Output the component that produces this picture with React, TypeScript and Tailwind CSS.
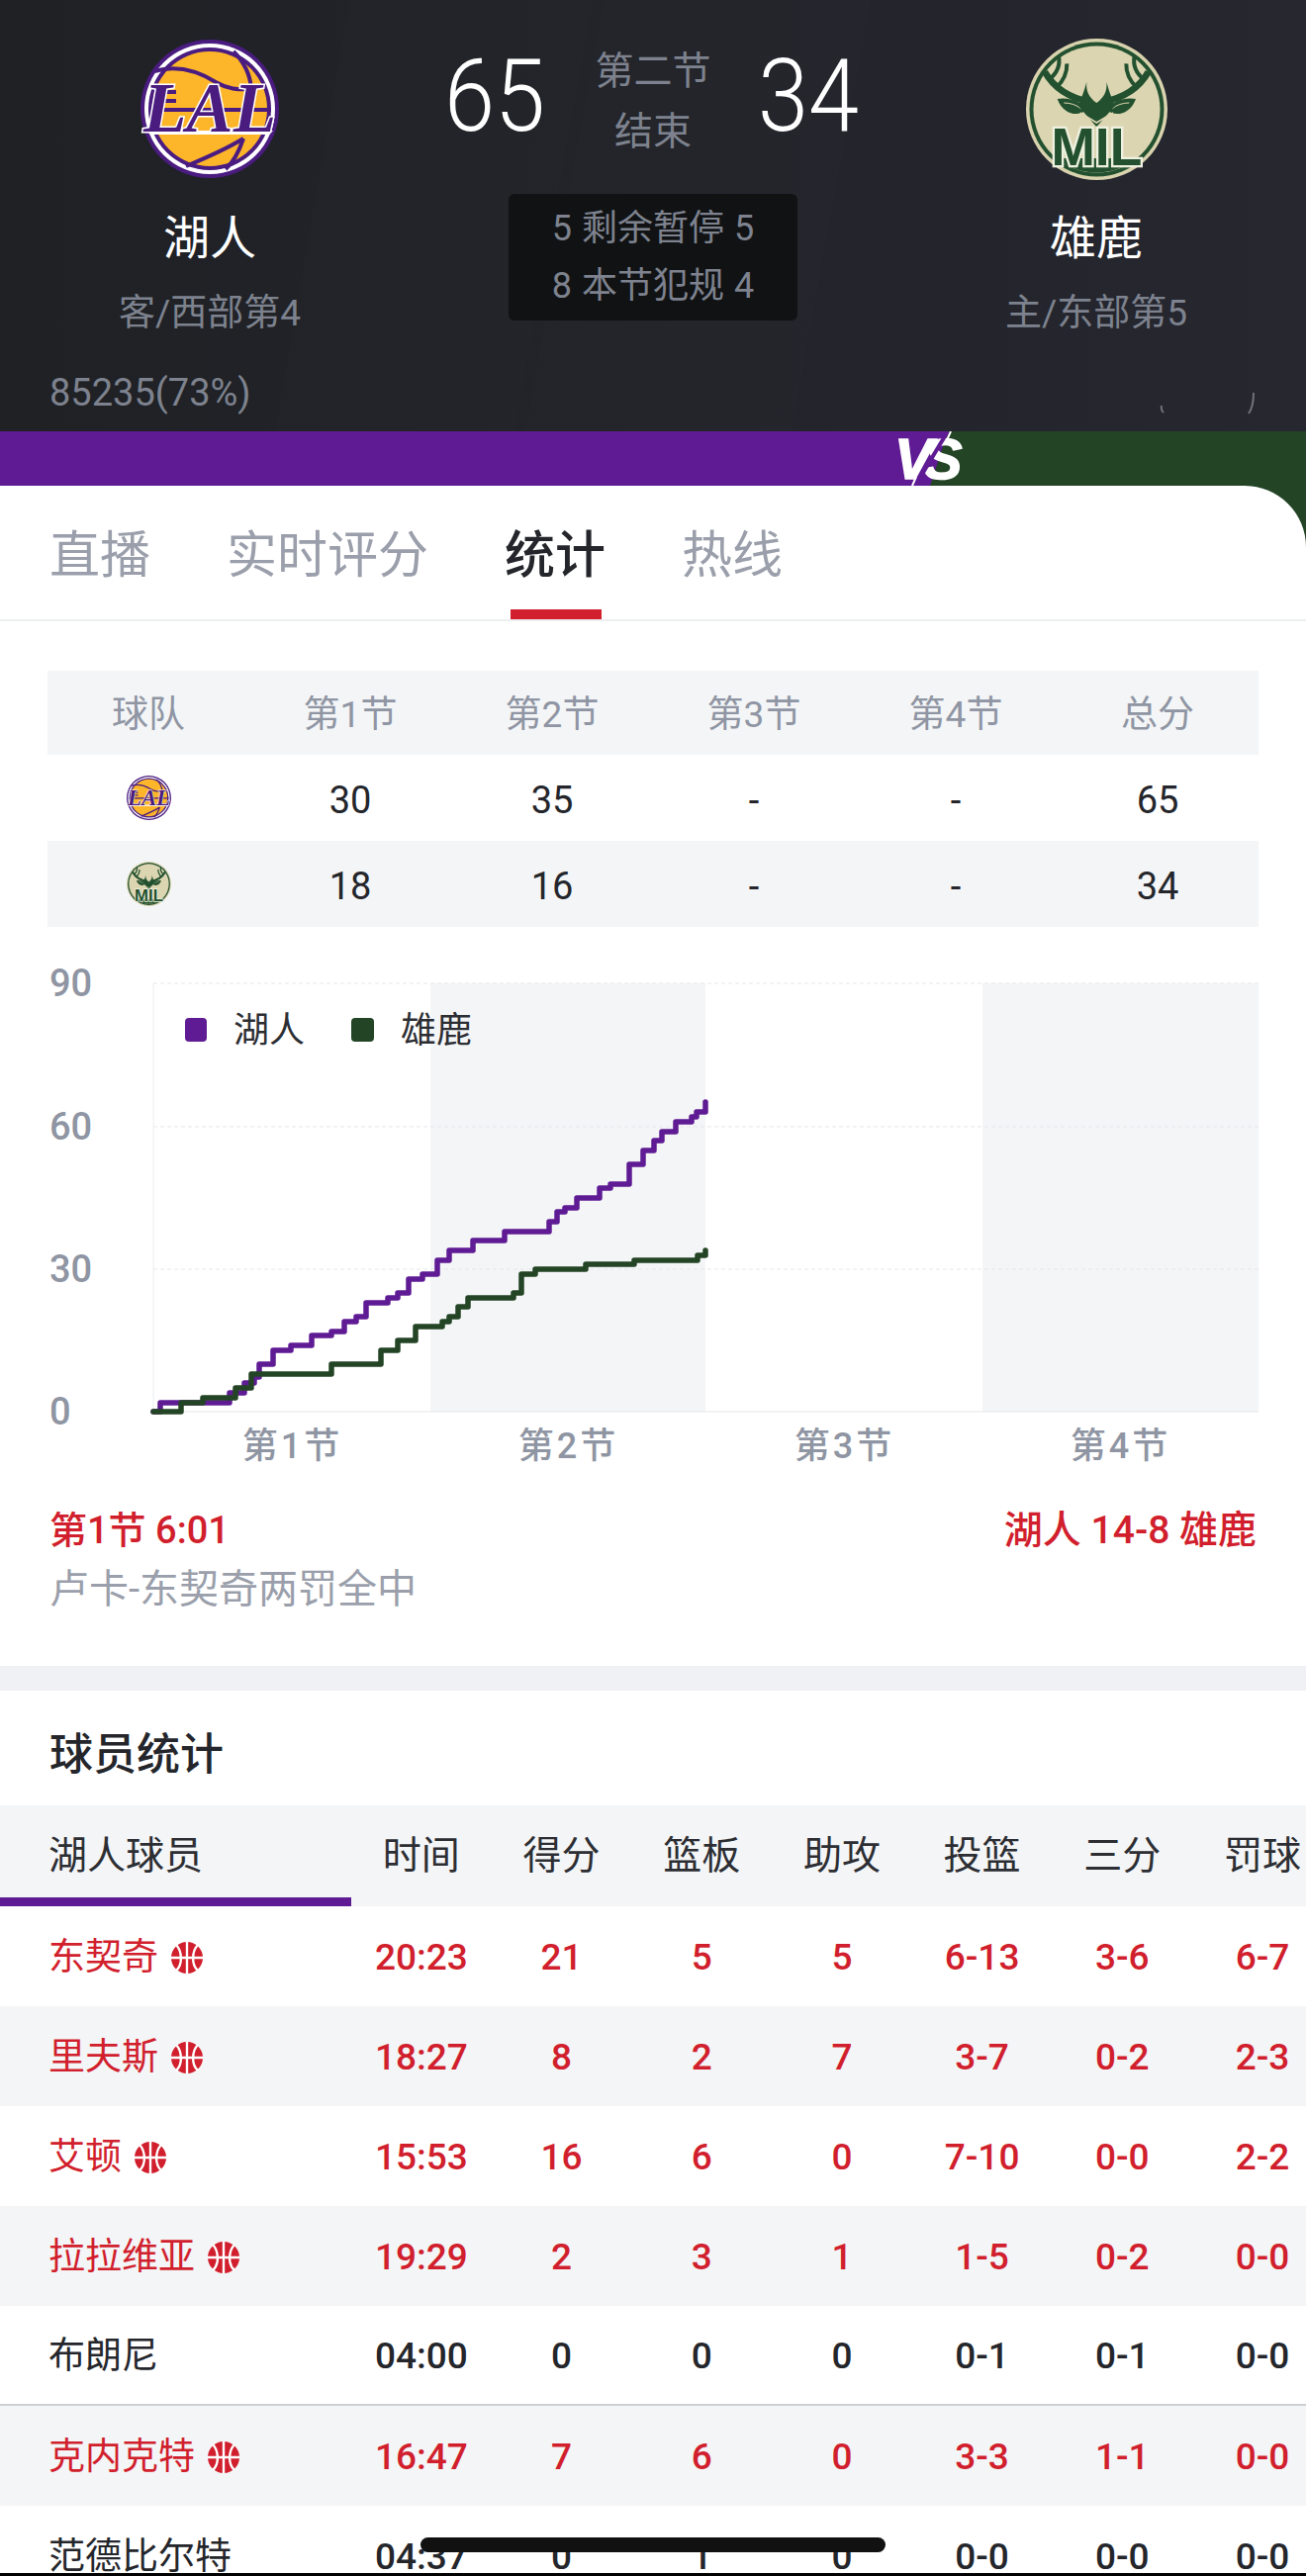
import clsx from 'clsx';

const FONT = "font-[Roboto,'Noto_Sans_CJK_SC',sans-serif]";

const QUARTER_ROWS = [
  { team: 'lal', scores: ['30', '35', '-', '-', '65'] },
  { team: 'mil', scores: ['18', '16', '-', '-', '34'] },
];

const STAT_COLS = ['时间', '得分', '篮板', '助攻', '投篮', '三分', '罚球'];

// onCourt players are the red rows with a ball next to the name
const PLAYERS = [
  { name: '东契奇', onCourt: true, stats: ['20:23', '21', '5', '5', '6-13', '3-6', '6-7'] },
  { name: '里夫斯', onCourt: true, stats: ['18:27', '8', '2', '7', '3-7', '0-2', '2-3'] },
  { name: '艾顿', onCourt: true, stats: ['15:53', '16', '6', '0', '7-10', '0-0', '2-2'] },
  { name: '拉拉维亚', onCourt: true, stats: ['19:29', '2', '3', '1', '1-5', '0-2', '0-0'] },
  { name: '布朗尼', onCourt: false, stats: ['04:00', '0', '0', '0', '0-1', '0-1', '0-0'] },
  { name: '克内克特', onCourt: true, stats: ['16:47', '7', '6', '0', '3-3', '1-1', '0-0'] },
  { name: '范德比尔特', onCourt: false, stats: ['04:37', '0', '1', '0', '0-0', '0-0', '0-0'] },
];

// score steps as [x, y] in page pixels (y is relative to the page)
const LAKERS_STEPS = [
  [162, 1417], [232, 1407], [247, 1397], [257, 1391], [262, 1378], [276, 1364], [294, 1359], [315, 1349],
  [335, 1345], [348, 1335], [360, 1330], [370, 1316], [392, 1311], [402, 1306], [413, 1292], [427, 1287],
  [442, 1273], [454, 1263], [478, 1253], [510, 1244], [555, 1234], [563, 1224], [571, 1220], [583, 1210],
  [606, 1200], [617, 1196], [636, 1176], [650, 1162], [661, 1152], [669, 1143], [683, 1133], [699, 1128],
  [704, 1123], [713, 1113],
];
const BUCKS_STEPS = [
  [183, 1417], [205, 1412], [238, 1402], [254, 1388], [335, 1378], [385, 1364], [402, 1354], [420, 1340],
  [447, 1335], [454, 1330], [463, 1320], [473, 1311], [519, 1306], [527, 1287], [541, 1282], [592, 1277],
  [641, 1273], [705, 1268], [713, 1263],
];

function stepPath(steps: number[][]) {
  let d = 'M155 1426';
  for (const [x, y] of steps) {
    d += ` H${x} V${y}`;
  }
  return d;
}

function LakersLogo({ size }: { size: number }) {
  return (
    <svg width={size} height={size} viewBox="0 0 140 140">
      <circle cx="70" cy="70" r="70" fill="#4a1c80" />
      <circle cx="70" cy="70" r="66" fill="#fff" />
      <circle cx="70" cy="70" r="62" fill="#4a1c80" />
      <circle cx="70" cy="70" r="58" fill="#fdb52a" />
      <g fill="none" stroke="#4a1c80" strokeWidth="4">
        <path d="M14 32 C35 26 55 30 76 43 C88 50 98 51 112 50" />
        <path d="M94 12 C106 24 111 36 112 50" />
        <path d="M46 128 C70 118 88 110 104 100" />
        <path d="M104 100 C100 112 94 124 86 131" />
        <path d="M12 53 H36 M10 62 H36 M8 71 H132" />
      </g>
      <path d="M6 92 H134 L130 96 H10 Z" fill="#fff" />
      <text
        x="70"
        y="93"
        textAnchor="middle"
        fontFamily="'Liberation Serif', serif"
        fontStyle="italic"
        fontWeight="700"
        fontSize="71"
        fill="#4a1c80"
        stroke="#fff"
        strokeWidth="3"
        paintOrder="stroke"
      >
        LAL
      </text>
    </svg>
  );
}

function BucksLogo({ size }: { size: number }) {
  return (
    <svg width={size} height={size} viewBox="0 0 143 143">
      <circle cx="71.5" cy="71.5" r="71.5" fill="#d9d2ae" />
      <circle cx="71.5" cy="71.5" r="68" fill="#23512f" />
      <circle cx="71.5" cy="71.5" r="64" fill="#dcd5b2" />
      {/* drawn in the coordinates of a 3x crop of the logo */}
      <g transform="translate(-27 -19) scale(0.3333)">
        <path d="M173 420 H417 A192 192 0 0 1 173 420 Z" fill="#23512f" />
        {[0, 1].map((side) => (
          <g key={side} transform={side ? 'translate(590 0) scale(-1 1)' : undefined}>
            <g fill="none" stroke="#23512f">
              <path d="M278 250 C225 240 170 215 138 158" strokeWidth="20" />
              <path d="M172 207 C192 188 206 165 205 133" strokeWidth="12" />
              <path d="M150 182 C172 165 186 140 180 110" strokeWidth="12" />
            </g>
            <path d="M176 240 C205 234 245 243 264 272 C245 294 195 292 176 240 Z" fill="#23512f" />
            <path d="M196 252 C215 252 235 258 248 270" fill="none" stroke="#dcd5b2" strokeWidth="3" />
          </g>
        ))}
        <path
          d="M265 188 C262 215 272 235 295 252 C318 235 328 215 325 188 C335 225 345 245 350 262 L295 325 L240 262 C245 245 255 225 265 188 Z"
          fill="#23512f"
        />
        <path d="M245 282 L295 312 L345 282" fill="none" stroke="#dcd5b2" strokeWidth="5" />
        <text
          x="295"
          y="440"
          textAnchor="middle"
          fontFamily="'Liberation Sans', sans-serif"
          fontWeight="700"
          fontSize="160"
          fill="#23512f"
          stroke="#eef0df"
          strokeWidth="14"
          paintOrder="stroke"
        >
          MIL
        </text>
      </g>
    </svg>
  );
}

function BallIcon() {
  return (
    <svg width="32" height="32" viewBox="0 0 32 32">
      <circle cx="16" cy="16" r="16" fill="#d11f2d" />
      <path
        d="M16 0 V32 M0 16 H32 M5 3 C11 9 12 23 5 29 M27 3 C21 9 20 23 27 29"
        fill="none"
        stroke="#fff"
        strokeWidth="2.4"
      />
    </svg>
  );
}

function ScoreChart() {
  const top = 970;
  return (
    <svg width="1320" height="520" viewBox={`0 ${top} 1320 520`} className="block">
      <rect x="435" y="993" width="278" height="433" fill="#f4f5f7" />
      <rect x="993" y="993" width="279" height="433" fill="#f4f5f7" />
      {[993, 1138, 1282].map((y) => (
        <line key={y} x1="155" x2="1272" y1={y} y2={y} stroke="#e6e7ea" strokeWidth="1" strokeDasharray="4 3" />
      ))}
      <line x1="155" x2="155" y1="993" y2="1426" stroke="#eceef0" />
      <line x1="155" x2="1272" y1="1426" y2="1426" stroke="#e5e7ea" />

      <g fontSize="38" fontWeight="500" fill="#8f95a3">
        <text x="50" y="1006">90</text>
        <text x="50" y="1151">60</text>
        <text x="50" y="1295">30</text>
        <text x="50" y="1439">0</text>
      </g>
      <g fontSize="36" fontWeight="500" fill="#8f95a3" textAnchor="middle" wordSpacing="-6">
        <text x="294" y="1473">第 1 节</text>
        <text x="573" y="1473">第 2 节</text>
        <text x="852" y="1473">第 3 节</text>
        <text x="1131" y="1473">第 4 节</text>
      </g>

      <rect x="187" y="1028" width="22" height="24" rx="4" fill="#5f1b94" />
      <text x="236" y="1053" fontSize="36" fill="#2c2e33">湖人</text>
      <rect x="355" y="1028" width="23" height="24" rx="4" fill="#234425" />
      <text x="405" y="1053" fontSize="36" fill="#2c2e33">雄鹿</text>

      <g fill="none" strokeWidth="5.5" strokeLinejoin="round" strokeLinecap="round">
        <path d={stepPath(LAKERS_STEPS)} stroke="#5f1b94" />
        <path d={stepPath(BUCKS_STEPS)} stroke="#234425" />
      </g>
    </svg>
  );
}

export default function App() {
  return (
    <div className={clsx(FONT, 'relative h-[2604px] w-[1320px] overflow-hidden bg-white')}>
      {/* Scoreboard */}
      <div className="relative flex h-[436px] bg-gradient-to-r from-[#1f2125] to-[#26272f]">
        <svg className="absolute inset-0" width="1320" height="436" aria-hidden="true">
          <polygon points="353,0 600,0 520,436 278,436" fill="#ffffff" fillOpacity="0.007" />
          <polygon points="610,0 880,0 800,436 530,436" fill="#ffffff" fillOpacity="0.007" />
        </svg>

        <div className="relative flex w-[424px] flex-col items-center pt-[40px]">
          <LakersLogo size={140} />
          <div className="mt-[36px] text-[47px] leading-[50px] text-white">湖人</div>
          <div className="mt-[26px] text-[37px] leading-[50px] text-[#7d828e]">客/西部第4</div>
          <div className="mt-[30px] self-start pl-[50px] text-[38px] leading-[50px] text-[#7d828e]">85235(73%)</div>
        </div>

        <div className="relative w-[472px] pt-[41px]">
          <div className="grid h-[123px] grid-cols-[152px_168px_146px] items-center text-center">
            <div className="mb-[10px] scale-y-110 text-[92px] leading-none font-light text-white">65</div>
            <div className="text-[39px] leading-[61px] text-[#7d828e]">
              <div>第二节</div>
              <div>结束</div>
            </div>
            <div className="mb-[10px] scale-y-110 text-[92px] leading-none font-light text-white">34</div>
          </div>
          <div className="mx-auto mt-[32px] flex h-[128px] w-[292px] flex-col justify-center rounded-md bg-[#111214] text-[36px] leading-[58px] text-[#7d828e]">
            <div className="flex justify-center gap-[10px]">
              <span>5</span>
              <span>剩余暂停</span>
              <span>5</span>
            </div>
            <div className="flex justify-center gap-[10px]">
              <span>8</span>
              <span>本节犯规</span>
              <span>4</span>
            </div>
          </div>
        </div>

        <div className="relative flex w-[424px] flex-col items-center pt-[39px]">
          <BucksLogo size={143} />
          <div className="mt-[34px] text-[47px] leading-[50px] text-white">雄鹿</div>
          <div className="mt-[26px] text-[37px] leading-[50px] text-[#7d828e]">主/东部第5</div>
        </div>

        {/* what is left of the home team's support count */}
        <svg className="absolute top-[385px] left-[1165px]" width="110" height="36" aria-hidden="true">
          <path d="M9 25 Q8 29 11 32 M102 12 Q102 26 97 33" fill="none" stroke="#fff" strokeOpacity="0.35" strokeWidth="2" />
        </svg>
      </div>

      {/* Team colour bar */}
      <div className="relative h-[55px] bg-[#5f1b94]">
        <div className="absolute inset-y-0 right-0 w-[380px] bg-[#234425] [clip-path:polygon(18px_0,100%_0,100%_100%,0_100%)]" />
        <div className="absolute top-[-3px] left-[904px] font-['Liberation_Sans',sans-serif] text-[58px] leading-[62px] font-bold tracking-[-9px] text-white italic [-webkit-text-stroke:1.5px_white]">
          VS
        </div>
        <svg className="absolute top-0 left-[910px]" width="60" height="55" aria-hidden="true">
          <path d="M48 0 L15 55" fill="none" stroke="#5f1b94" strokeWidth="4" />
          <path d="M51 0 L47 9 M12 55 L16 46" fill="none" stroke="#fff" strokeWidth="2" />
        </svg>
      </div>

      {/* Tabs */}
      <div className="bg-[#234425]">
        <div className="flex h-[137px] gap-[77px] rounded-tr-[62px] border-b-2 border-[#eceef0] bg-white pl-[50px] text-[51px] text-[#9a9fab]">
          <div className="flex items-center pt-[8px]">直播</div>
          <div className="flex items-center pt-[8px]">实时评分</div>
          <div className="relative flex items-center pt-[8px] font-medium text-[#24262b]">
            统计
            <div className="absolute bottom-0 left-[6px] h-[10px] w-[92px] bg-[#d11f2d]" />
          </div>
          <div className="flex items-center pt-[8px]">热线</div>
        </div>
      </div>

      {/* Score per quarter */}
      <div className="mx-[48px] mt-[50px] text-[37px]">
        <div className="grid h-[85px] grid-cols-6 items-center bg-[#f4f5f7] pt-[4px] text-center text-[#8f95a3]">
          {['球队', '第1节', '第2节', '第3节', '第4节', '总分'].map((label) => (
            <div key={label}>{label}</div>
          ))}
        </div>
        {QUARTER_ROWS.map((row) => (
          <div
            key={row.team}
            className={clsx(
              'grid h-[87px] grid-cols-6 items-center text-center text-[38px] text-[#24262b]',
              row.team === 'mil' && 'bg-[#f4f5f7]',
            )}
          >
            <div className="flex justify-center">
              {row.team === 'lal' ? <LakersLogo size={45} /> : <BucksLogo size={45} />}
            </div>
            {row.scores.map((score, i) => (
              <div key={i} className="pt-[5px]">
                {score}
              </div>
            ))}
          </div>
        ))}
      </div>

      {/* Score chart */}
      <div className="mt-[34px] mb-[-10px]">
        <ScoreChart />
      </div>

      {/* Selected play */}
      <div className="mt-[41px] flex justify-between px-[50px] text-[38px] leading-[50px] font-medium text-[#d11f2d]">
        <span>第1节 6:01</span>
        <span className="text-[39px]">湖人 14-8 雄鹿</span>
      </div>
      <div className="mt-[10px] pl-[50px] text-[40px] leading-[50px] text-[#9a9fab]">卢卡-东契奇两罚全中</div>

      <div className="mt-[52px] h-[25px] bg-[#f0f1f4]" />

      {/* Player stats */}
      <div className="flex h-[116px] items-center pt-[14px] pl-[50px] text-[44px] font-medium text-[#24262b]">球员统计</div>
      <div className="grid h-[102px] grid-cols-[355px_repeat(7,141.7px)] items-center bg-[#f4f5f7] text-center text-[39px] text-[#2c2e33]">
        <div className="relative flex h-full items-center pl-[49px] text-left">
          湖人球员
          <div className="absolute right-0 bottom-0 left-0 h-[9px] bg-[#5f1b94]" />
        </div>
        {STAT_COLS.map((col) => (
          <div key={col}>{col}</div>
        ))}
      </div>
      {PLAYERS.map((player, i) => (
        <div
          key={player.name}
          className={clsx(
            'grid h-[101px] grid-cols-[355px_repeat(7,141.7px)] items-center text-center text-[37px] font-medium',
            i % 2 === 1 && 'bg-[#f4f5f7]',
            i === 4 && 'border-b-2 border-[#cfd0d2]',
            player.onCourt ? 'text-[#d11f2d]' : 'text-[#24262b]',
          )}
        >
          <div className="flex items-center gap-[13px] pt-[2px] pl-[49px] text-left font-normal">
            {player.name}
            {player.onCourt && <BallIcon />}
          </div>
          {player.stats.map((value, j) => (
            <div key={j} className="pt-[2px]">
              {value}
            </div>
          ))}
        </div>
      ))}

      {/* Phone chrome */}
      <div className="absolute top-[2565px] left-[425px] h-[15px] w-[470px] rounded-[8px] bg-[#111]" />
      <div className="absolute inset-x-0 bottom-0 h-[3px] bg-black" />
    </div>
  );
}
